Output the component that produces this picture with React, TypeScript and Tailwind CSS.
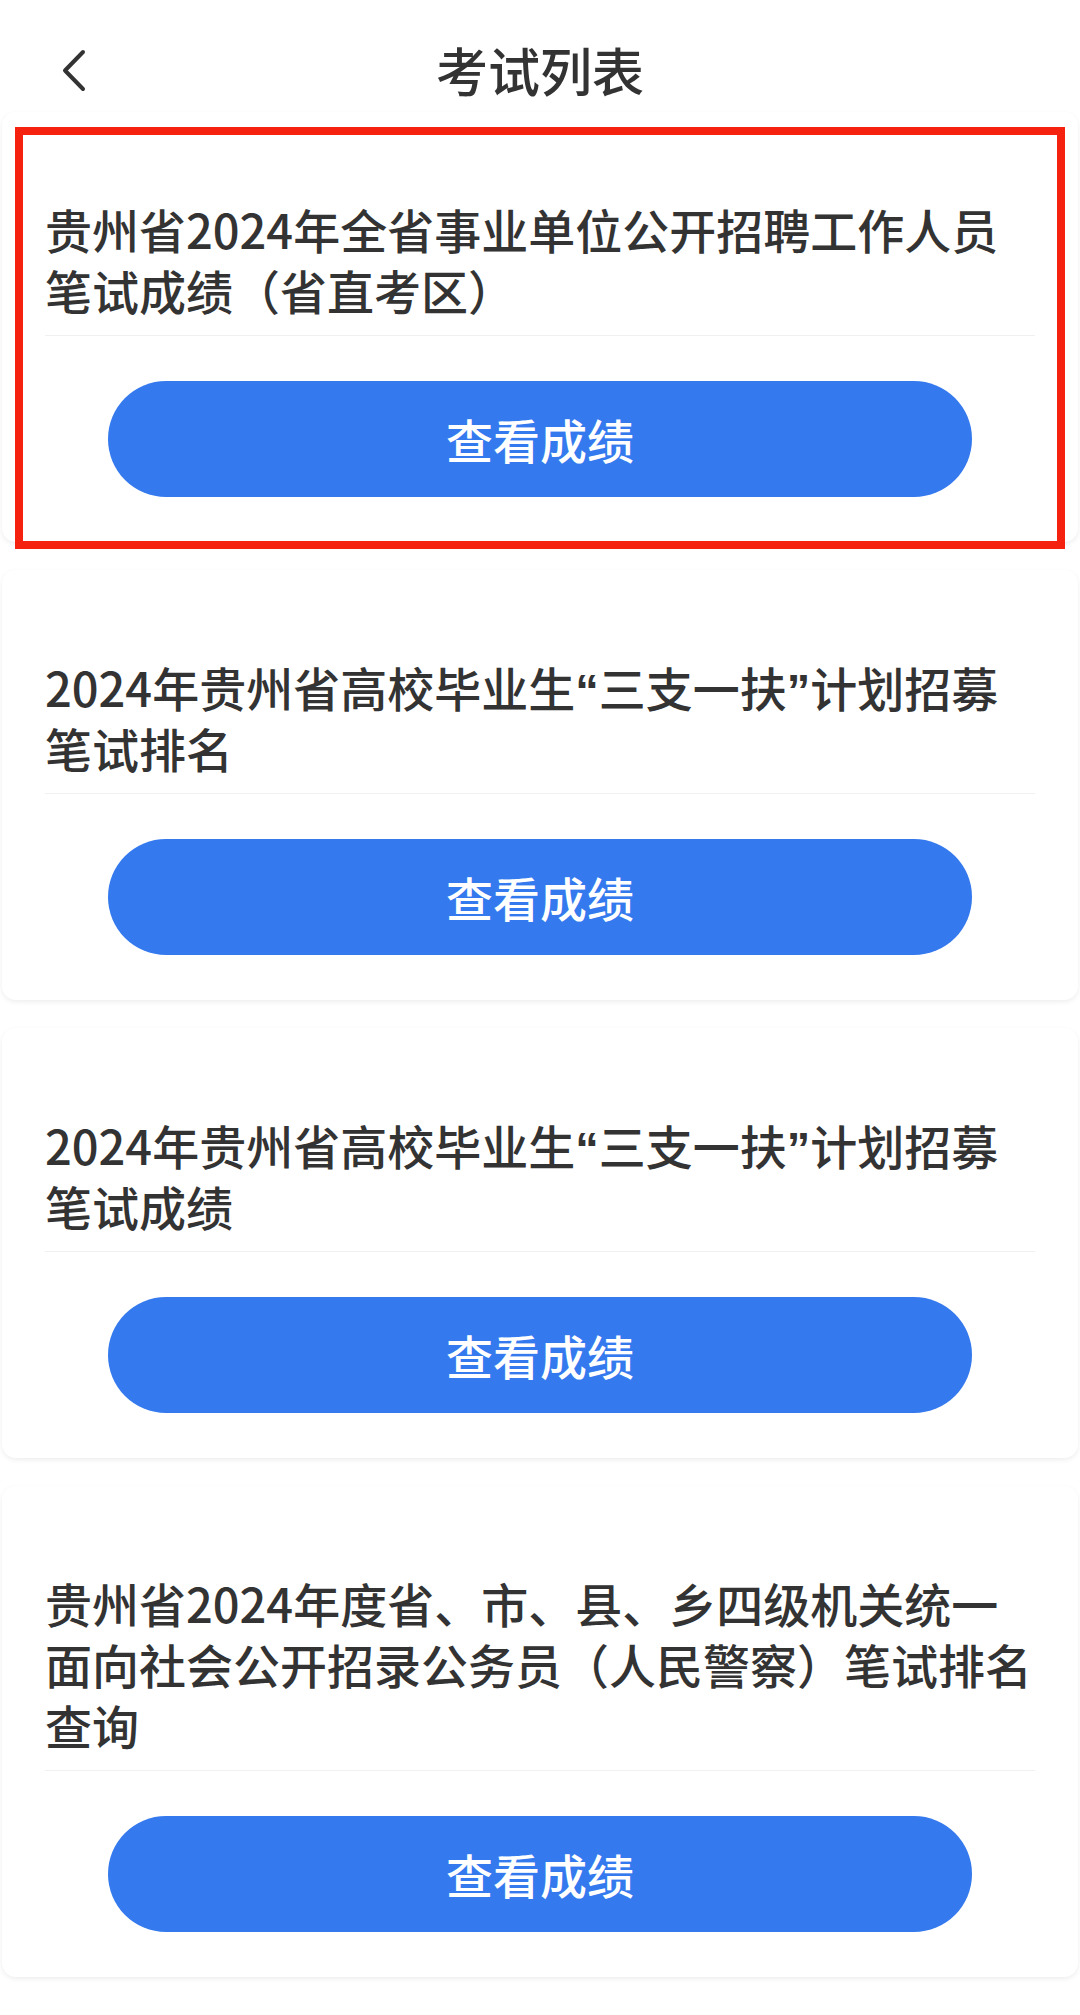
const exams = [
  "贵州省2024年全省事业单位公开招聘工作人员笔试成绩（省直考区）",
  "2024年贵州省高校毕业生“三支一扶”计划招募笔试排名",
  "2024年贵州省高校毕业生“三支一扶”计划招募笔试成绩",
  "贵州省2024年度省、市、县、乡四级机关统一面向社会公开招录公务员（人民警察）笔试排名查询",
];

export default function App() {
  return (
    <div className="min-h-screen bg-white font-['Noto_Sans_CJK_SC',sans-serif] text-[#333333]">
      {/* Header */}
      <header className="grid h-[112px] grid-cols-[1fr_auto_1fr] items-start pt-[44px]">
        <button className="ml-[62px] mt-[5px] w-fit">
          <svg width="24" height="43" viewBox="0 0 24 43" fill="none">
            <path
              d="M21 3 L3 21.5 L21 40"
              stroke="#333333"
              strokeWidth="4"
              strokeLinecap="round"
              strokeLinejoin="round"
            />
          </svg>
        </button>
        <h1 className="text-[52px] font-medium leading-[52px]">考试列表</h1>
        <div />
      </header>

      {/* List */}
      <div className="flex flex-col gap-[28px]">
        {exams.map((title, i) => (
          <div key={i} className="relative">
            <ExamCard title={title} />
            {i === 0 && (
              <div className="pointer-events-none absolute top-[15px] right-[15px] bottom-[-7px] left-[15px] border-[8px] border-[#f5220f]" />
            )}
          </div>
        ))}
      </div>
    </div>
  );
}

function ExamCard({ title }: { title: string }) {
  // curly quotes are narrow in the original, Noto draws them full width
  const parts = title.split(/([“”])/);
  return (
    <div className="mx-[2px] rounded-[14px] bg-white px-[43px] pt-[86px] pb-[45px] shadow-[0_2px_5px_rgba(0,0,0,0.07)]">
      <p className="text-[47px] font-medium leading-[61px]">
        {parts.map((p, j) =>
          p === "“" || p === "”" ? (
            <span key={j} className="font-['Liberation_Sans',sans-serif] font-bold leading-none">
              {p}
            </span>
          ) : (
            p
          )
        )}
      </p>
      <div className="mt-[15px] h-px bg-[#f0f0f0]" />
      <button className="mx-auto mt-[45px] flex h-[116px] w-[864px] items-center justify-center rounded-full bg-[#3479ee] text-[47px] font-medium text-white">
        查看成绩
      </button>
    </div>
  );
}
